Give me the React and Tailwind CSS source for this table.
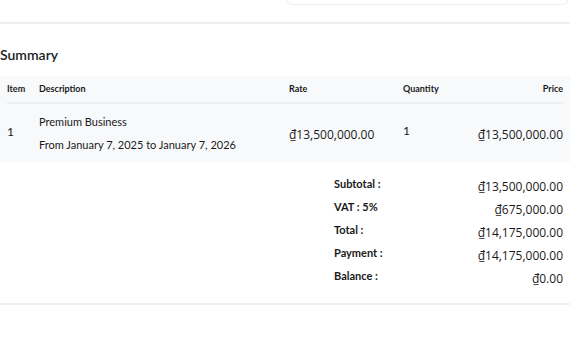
export default function App() {
  const label = { fontFamily: 'Lato, "Noto Sans", sans-serif' };
  const num = { fontFamily: '"Open Sans", "Noto Sans", sans-serif' };
  const totals = [
    ["Subtotal :", "₫13,500,000.00"],
    ["VAT : 5%", "₫675,000.00"],
    ["Total :", "₫14,175,000.00"],
    ["Payment :", "₫14,175,000.00"],
    ["Balance :", "₫0.00"],
  ];
  return (
    <div className="w-[586px] h-[348px] bg-white overflow-hidden text-[#1a1a1a]" style={label}>
      <div className="w-[570px]">
        <div className="flex justify-end pr-[2px]">
          <div className="w-[281px] h-[5px] border border-t-0 border-[#eeeeee] rounded-b-[8px]"></div>
        </div>
        <div className="mt-[17px] h-[2px] bg-[#efefef]"></div>
        <div className="mt-[22px] text-[14px] font-semibold leading-[18px] text-[#1d1d1f]">Summary</div>
        <div className="mt-[12px] bg-[#f8f9fb] px-[7px]">
          <div className="grid grid-cols-[32px_250px_114px_1fr_auto] items-center h-[28px] text-[9px] font-bold border-b-2 border-[#eceef1]">
            <div>Item</div>
            <div>Description</div>
            <div>Rate</div>
            <div>Quantity</div>
            <div className="text-right">Price</div>
          </div>
          <div className="grid grid-cols-[32px_250px_114px_1fr_auto] items-center h-[58px]">
            <div className="text-[12px] -mt-[2px]">1</div>
            <div className="flex flex-col gap-[9px] text-[11px] leading-[14px] mt-[1px]">
              <div>Premium Business</div>
              <div>From January 7, 2025 to January 7, 2026</div>
            </div>
            <div className="text-[12px] mt-[3px]" style={num}>₫13,500,000.00</div>
            <div className="text-[12px] -mt-[4px]">1</div>
            <div className="text-[12px] text-right mt-[3px]" style={num}>₫13,500,000.00</div>
          </div>
        </div>
        <div className="flex flex-col pt-[16px] pb-[18px] pl-[334px] pr-[7px] gap-[8px]">
          {totals.map(([k, v]) => (
            <div key={k} className="flex justify-between items-start h-[15px]">
              <span className="text-[11px] font-bold leading-[12px]">{k}</span>
              <span className="text-[12px] leading-[16px] mt-[1px]" style={num}>{v}</span>
            </div>
          ))}
        </div>
        <div className="h-[2px] bg-[#efefef]"></div>
      </div>
    </div>
  );
}
